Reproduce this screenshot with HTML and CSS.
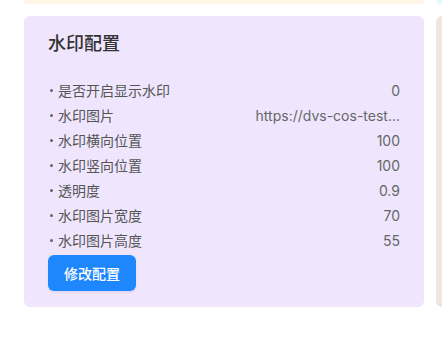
FILE: index.html
```html
<!DOCTYPE html>
<html lang="zh">
<head>
<meta charset="utf-8">
<title>水印配置</title>
<link rel="stylesheet" href="styles.css">
</head>
<body>
<div class="board">
  <div class="stub stub-cream"></div>
  <div class="stub stub-cyan"></div>
  <section class="card card-lavender">
    <h2 class="card-title">水印配置</h2>
    <ul class="config-list">
      <li class="config-row"><span class="label">是否开启显示水印</span><span class="value">0</span></li>
      <li class="config-row"><span class="label">水印图片</span><span class="value value-url">https://dvs-cos-test...</span></li>
      <li class="config-row"><span class="label">水印横向位置</span><span class="value">100</span></li>
      <li class="config-row"><span class="label">水印竖向位置</span><span class="value">100</span></li>
      <li class="config-row"><span class="label">透明度</span><span class="value">0.9</span></li>
      <li class="config-row"><span class="label">水印图片宽度</span><span class="value">70</span></li>
      <li class="config-row"><span class="label">水印图片高度</span><span class="value">55</span></li>
    </ul>
    <button class="btn-primary" type="button">修改配置</button>
  </section>
  <section class="card card-beige"></section>
</div>
</body>
</html>
```

FILE: styles.css
```css
html, body {
  margin: 0;
  padding: 0;
  background: #ffffff;
}

body {
  font-family: Inter, "Noto Sans CJK SC", sans-serif;
  width: 442px;
  height: 340px;
  overflow: hidden;
}

.board {
  display: grid;
  grid-template-columns: 400px 6px;
  grid-template-rows: 4px 291px;
  column-gap: 12px;
  row-gap: 12px;
  padding-left: 24px;
}

.stub {
  border-radius: 0 0 6px 6px;
}

.stub-cream {
  background: #fef7e6;
}

.stub-cyan {
  background: #e6f6fb;
  border-radius: 0 0 0 6px;
}

.card {
  border-radius: 6px;
  box-sizing: border-box;
}

.card-lavender {
  background: #efe6fe;
  padding: 16px 24px 15px 24px;
  display: flex;
  flex-direction: column;
  align-items: flex-start;
}

.card-beige {
  background: #ede6e1;
  border-radius: 6px 0 0 6px;
}

.card-title {
  margin: 0;
  font-size: 18px;
  line-height: 24px;
  font-weight: 500;
  color: #333333;
}

.config-list {
  list-style: none;
  margin: 22px 0 2px 0;
  padding: 0;
  width: 100%;
}

.config-row {
  display: flex;
  justify-content: space-between;
  align-items: center;
  height: 25px;
  font-size: 14px;
  line-height: 20px;
  color: #555555;
}

.label::before {
  content: "";
  display: inline-block;
  vertical-align: middle;
  width: 3px;
  height: 3px;
  border-radius: 50%;
  background: #666666;
  margin: 0 5px 2px 2px;
}

.value {
  color: #666666;
  text-align: right;
}

.value-url {
  max-width: 160px;
  overflow: hidden;
  white-space: nowrap;
  text-overflow: ellipsis;
}

.btn-primary {
  width: 88px;
  height: 36px;
  border: none;
  border-radius: 6px;
  background: #1f87fe;
  color: #ffffff;
  font-family: Inter, "Noto Sans CJK SC", sans-serif;
  font-size: 14px;
  font-weight: 500;
  box-shadow: 0 2px 2px rgba(0, 0, 0, 0.06);
  padding: 0;
}
```
